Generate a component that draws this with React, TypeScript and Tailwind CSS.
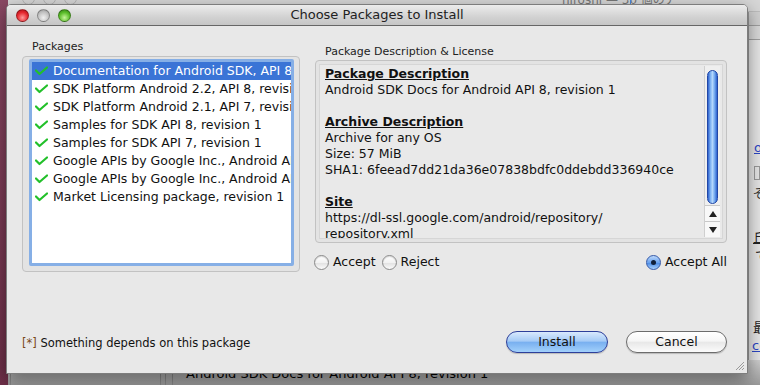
import React from 'react';

const font = "font-['DejaVu_Sans','Lucida_Grande',sans-serif]";

const packages = [
  'Documentation for Android SDK, API 8, revision 1',
  'SDK Platform Android 2.2, API 8, revision 2',
  'SDK Platform Android 2.1, API 7, revision 2',
  'Samples for SDK API 8, revision 1',
  'Samples for SDK API 7, revision 1',
  'Google APIs by Google Inc., Android API 8, revision 2',
  'Google APIs by Google Inc., Android API 7, revision 1',
  'Market Licensing package, revision 1',
];

const Check: React.FC = () => (
  <svg width="13" height="10" viewBox="0 0 13 10" className="shrink-0">
    <polyline points="1,4.5 4.5,8 12,1.5" fill="none" stroke="#22c02a" strokeWidth="2.2" strokeLinecap="round" strokeLinejoin="round" />
  </svg>
);

const Radio: React.FC<{ label: string; checked?: boolean }> = ({ label, checked }) => (
  <label className="flex items-center gap-[4px]">
    {checked ? (
      <span className="w-[15px] h-[15px] rounded-full border border-[#3559a8] bg-[linear-gradient(#bcd8fb,#6aa2ee_50%,#4d8ce6_55%,#a9d1fb)] flex items-center justify-center">
        <span className="w-[5px] h-[5px] rounded-full bg-[#10203a]" />
      </span>
    ) : (
      <span className="w-[15px] h-[15px] rounded-full border border-[#8a8a8a] bg-[linear-gradient(#ffffff,#f2f2f2_50%,#e2e2e2_55%,#fbfbfb)] shadow-[inset_0_1px_1px_rgba(0,0,0,0.15)]" />
    )}
    <span>{label}</span>
  </label>
);

const Light: React.FC<{ cls: string }> = ({ cls }) => (
  <span className={`w-[13px] h-[13px] rounded-full border border-black/30 ${cls}`} />
);

const ScrollBar: React.FC = () => (
  <div className="w-[16px] shrink-0 my-[1px] mr-[2px] flex flex-col bg-[#efefef] border-l border-[#cfcfcf]">
    <div className="flex-1 flex flex-col px-[2px] pt-[4px] pb-[1px]">
      <div className="flex-1 rounded-full border border-[#2147a6] bg-[linear-gradient(to_right,#2d62cf,#86b8f4_30%,#b3d6fc_50%,#7cb1f2_70%,#2d62cf)]" />
    </div>
    <div className="h-[16px] flex items-center justify-center border-t border-[#c8c8c8] bg-[#f8f8f8]">
      <svg width="8" height="6" viewBox="0 0 8 6"><polygon points="4,0 8,6 0,6" fill="#222" /></svg>
    </div>
    <div className="h-[16px] flex items-center justify-center border-t border-[#c8c8c8] bg-[#f8f8f8]">
      <svg width="8" height="6" viewBox="0 0 8 6"><polygon points="0,0 8,0 4,6" fill="#222" /></svg>
    </div>
  </div>
);

export default function App() {
  return (
    <div className={`relative w-[760px] h-[385px] overflow-hidden bg-[#a9a9a9] ${font}`}>
      {/* desktop + windows behind */}
      <div className="absolute left-0 top-0 w-[8px] h-full bg-[linear-gradient(#8a4863,#6f3049)]" />
      <div className="absolute left-[8px] top-0 right-0 h-[12px] bg-[#d7d7d7] border-b border-[#bdbdbd]">
        <div className="flex gap-[8px] pl-[14px] -mt-[8px]">
          <span className="w-[13px] h-[13px] rounded-full border border-[#b5b5b5]" />
          <span className="w-[13px] h-[13px] rounded-full border border-[#b5b5b5]" />
          <span className="w-[13px] h-[13px] rounded-full border border-[#b5b5b5]" />
        </div>
      </div>
      <div className="absolute left-[562px] -top-[9px] text-[12px] text-[#777] font-['DejaVu_Sans','Noto_Sans_CJK_JP',sans-serif]">hiroshi — 30 個のア</div>
      <div className="absolute left-[630px] top-0 w-px h-[4px] bg-[#4a8ae0]" />
      <div className="absolute left-[748px] top-[12px] right-0 bottom-0 bg-[#e6e6e6] border-l border-[#9a9a9a] text-[13px] font-['DejaVu_Sans','Noto_Sans_CJK_JP',sans-serif] overflow-hidden">
        <div className="h-[14px] border-b border-[#a0a0a0] bg-[#d0d0d0]" />
        <div className="h-[14px] border-b border-[#a0a0a0] bg-[#dadada]" />
        <div className="ml-[5px] mt-[100px] text-[#2c47c6] underline leading-[16px]">ogle</div>
        <div className="ml-[5px] mt-[10px] h-[14px] border border-[#999]" />
        <div className="ml-[4px] mt-[6px] text-[#333] leading-[16px]">ぞ</div>
        <div className="ml-[4px] mt-[28px] text-[#222] leading-[16px] underline">丘</div>
        <div className="ml-[6px] mt-[2px] text-[#222] leading-[16px]">て</div>
        <div className="ml-[4px] mt-[56px] text-[#222] leading-[16px]">最</div>
        <div className="ml-[3px] mt-[2px] text-[#2c47c6] leading-[16px] underline">co</div>
        <div className="ml-[3px] mt-[4px] text-[#2c47c6] leading-[16px] underline">e/</div>
      </div>
      <div className="absolute left-[8px] top-[360px] right-0 bottom-0 bg-[linear-gradient(#cfcfcf,#9a9a9a)]">
        <div className="absolute left-[2px] top-0 bottom-0 w-px bg-[#888]" />
        <div className="absolute left-[152px] top-0 bottom-0 w-px bg-[#888]" />
        <div className="absolute left-[157px] top-0 bottom-0 w-px bg-[#888]" />
        <div className="absolute left-[164px] top-0 bottom-0 w-px bg-[#888]" />
        <div className="absolute left-[178px] top-[4px] text-[13px] text-black whitespace-nowrap">Android SDK Docs for Android API 8, revision 1</div>
      </div>

      {/* dialog window */}
      <div className="absolute left-[6px] top-[4px] w-[742px] h-[370px] flex flex-col rounded-t-[5px] border border-[#7d7d7d] bg-[#e8e8e8] shadow-[0_6px_18px_rgba(0,0,0,0.45)] text-[12.5px] text-[#111]">
        <div className="h-[21px] shrink-0 relative flex items-center rounded-t-[4px] bg-[linear-gradient(#ececec,#d2d2d2_60%,#c6c6c6)] border-b border-[#666]">
          <div className="flex gap-[8px] pl-[9px]">
            <Light cls="bg-[radial-gradient(circle_at_50%_70%,#ff9a9a,#e5282f_55%,#a50d14)]" />
            <Light cls="bg-[radial-gradient(circle_at_50%_70%,#f0f0f0,#c4c4c4_55%,#969696)]" />
            <Light cls="bg-[radial-gradient(circle_at_50%_70%,#c6f59a,#5bbd2a_55%,#2f7c12)]" />
          </div>
          <div className="absolute inset-0 flex items-center justify-center text-[13px] text-[#222]">Choose Packages to Install</div>
        </div>

        <div className="flex-1 flex flex-col justify-between pl-[15px] pr-[20px] pb-[20px]">
          <div className="flex gap-[15px]">
            <div className="w-[278px] flex flex-col pt-[14px]">
              <div className="pl-[10px] text-[11px] leading-[14px] text-[#222]">Packages</div>
              <div className="mt-[2px] h-[216px] rounded-[4px] border border-[#c2c2c2] bg-[#e3e3e3] pl-[6px] pr-[5px] pt-[2px] pb-[5px]">
                <div className="h-full rounded-[2px] border-[3px] border-[#86afe6] bg-white overflow-hidden">
                  {packages.map((p, i) => (
                    <div key={p} className={`h-[18px] flex items-center gap-[5px] pl-[3px] whitespace-nowrap ${i === 0 ? 'bg-[#3a74d6] text-white' : ''}`}>
                      <Check />
                      <span>{p}</span>
                    </div>
                  ))}
                </div>
              </div>
            </div>

            <div className="w-[412px] flex flex-col pt-[19px]">
              <div className="pl-[10px] text-[11px] leading-[14px] text-[#222]">Package Description &amp; License</div>
              <div className="mt-[1px] h-[183px] rounded-[4px] border border-[#c2c2c2] bg-[#e3e3e3] p-[3px]">
                <div className="h-full flex border border-[#d6d6d6] bg-[#e9e9e9] overflow-hidden">
                  <div className="flex-1 pl-[5px] pt-[1px] leading-[16px] whitespace-nowrap overflow-hidden">
                    <div className="font-bold underline">Package Description</div>
                    <div>Android SDK Docs for Android API 8, revision 1</div>
                    <div className="h-[16px]" />
                    <div className="font-bold underline">Archive Description</div>
                    <div>Archive for any OS</div>
                    <div>Size: 57 MiB</div>
                    <div>SHA1: 6feead7dd21da36e07838bdfc0ddebdd336940ce</div>
                    <div className="h-[16px]" />
                    <div className="font-bold underline">Site</div>
                    <div>https://dl-ssl.google.com/android/repository/</div>
                    <div>repository.xml</div>
                  </div>
                  <ScrollBar />
                </div>
              </div>
              <div className="mt-[10px] flex items-center -ml-[1px]">
                <Radio label="Accept" />
                <div className="w-[6px]" />
                <Radio label="Reject" />
                <div className="flex-1" />
                <Radio label="Accept All" checked />
              </div>
            </div>
          </div>

          <div className="flex items-center">
            <div className="pt-[3px] text-[11.5px]"><span className="text-[#7a4a1a]">[*]</span> Something depends on this package</div>
            <div className="flex-1" />
            <button className="w-[102px] h-[22px] rounded-full border border-[#2d3f9a] bg-[linear-gradient(#d8e9fd,#a6cbf6_45%,#79b0f0_52%,#a2d0fb)] shadow-[0_1px_1px_rgba(0,0,0,0.2)] text-[12.5px]">Install</button>
            <div className="w-[18px]" />
            <button className="w-[101px] h-[22px] rounded-full border border-[#6c6c6c] bg-[linear-gradient(#ffffff,#f6f6f6_45%,#e8e8e8_52%,#fbfbfb)] shadow-[0_1px_1px_rgba(0,0,0,0.2)] text-[12.5px]">Cancel</button>
          </div>
        </div>

        <svg className="absolute right-[2px] bottom-[2px]" width="11" height="11" viewBox="0 0 11 11">
          <line x1="10" y1="2" x2="2" y2="10" stroke="#999" />
          <line x1="10" y1="5" x2="5" y2="10" stroke="#999" />
          <line x1="10" y1="8" x2="8" y2="10" stroke="#999" />
        </svg>
      </div>
    </div>
  );
}
